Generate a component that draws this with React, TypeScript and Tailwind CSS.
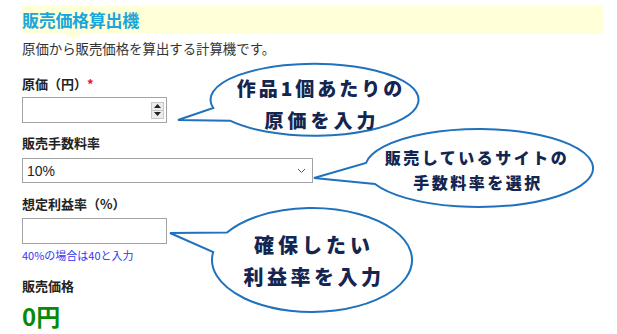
import React from "react";

const jp = "font-['Meiryo','Noto_Sans_CJK_JP',sans-serif]";

function Spinner() {
  return (
    <div className="flex flex-col w-[13px] h-[17px] mr-[2px] border border-[#c8c8c8] bg-[#ececec]">
      <div className="flex-1 flex items-center justify-center border-b border-[#c8c8c8]">
        <svg width="7" height="4" viewBox="0 0 7 4"><path d="M0 4 L3.5 0 L7 4 Z" fill="#222" /></svg>
      </div>
      <div className="flex-1 flex items-center justify-center">
        <svg width="7" height="4" viewBox="0 0 7 4"><path d="M0 0 L3.5 4 L7 0 Z" fill="#222" /></svg>
      </div>
    </div>
  );
}

export default function App() {
  const stroke = "#1f72bb";
  const ink = "#14264f";
  return (
    <div className={`relative w-[617px] h-[334px] bg-white overflow-hidden ${jp}`}>
      <div className="pl-[22px] pr-[14px] pt-[5px] flex flex-col">
        <div className="relative h-[29px] bg-[#ffffd8] flex items-center">
          <span className="text-[17px] font-bold leading-none text-[#1aa6dc] tracking-[-0.3px]">販売価格算出機</span>
          <div className="absolute left-[44px] top-full w-0 h-0 border-l-[7px] border-r-[7px] border-t-[6px] border-l-transparent border-r-transparent border-t-[#ffffd8]" />
        </div>
        <div className="mt-[6px] h-[17px] text-[13.4px] leading-[17px] text-[#333]">原価から販売価格を算出する計算機です。</div>

        <div className="mt-[19px] h-[16px] text-[13px] leading-[16px] font-bold text-[#222]">
          原価（円）<span className="text-[#e8121b]">*</span>
        </div>
        <div className="mt-[5px] w-[145px] h-[26px] border border-[#a3a3a3] bg-white flex items-center justify-end">
          <Spinner />
        </div>

        <div className="mt-[12px] h-[16px] text-[13px] leading-[16px] font-bold text-[#222]">販売手数料率</div>
        <div className="mt-[7px] w-[291px] h-[25px] border border-[#a3a3a3] bg-white flex items-center justify-between pl-[4px] pr-[6px]">
          <span className="text-[14px] leading-none text-[#222] font-['Liberation_Sans',sans-serif]">10%</span>
          <svg width="9" height="6" viewBox="0 0 9 6"><path d="M1 1 L4.5 4.5 L8 1" fill="none" stroke="#555" strokeWidth="1" /></svg>
        </div>

        <div className="mt-[13px] h-[16px] text-[13px] leading-[16px] font-bold text-[#222]">想定利益率（%）</div>
        <div className="mt-[6px] w-[145px] h-[26px] border border-[#a3a3a3] bg-white" />
        <div className="mt-[4px] h-[14px] text-[11px] leading-[14px] text-[#3535f0]">40%の場合は40と入力</div>

        <div className="mt-[16px] h-[16px] text-[13px] leading-[16px] font-bold text-[#222]">販売価格</div>
        <div className="mt-[9px] h-[26px] text-[24px] leading-[26px] font-bold text-[#088a08]">0円</div>
      </div>

      <svg className="absolute left-0 top-0" width="617" height="334" viewBox="0 0 617 334">
        <path d="M 213.3 108 A 104 36 0 1 1 230 120.7 L 178 120 Z" fill="white" stroke={stroke} strokeWidth="2" strokeLinejoin="miter" />
        <path d="M 366 163 A 114 39 0 1 1 375 184 L 314 178 Z" fill="white" stroke={stroke} strokeWidth="2" />
        <path d="M 227 232.6 A 100 52 0 1 1 213.2 252 L 170 233 Z" fill="white" stroke={stroke} strokeWidth="2" />
        <g fill={ink} fontWeight="900" fontFamily="'Noto Sans CJK JP', sans-serif" textAnchor="middle">
          <text x="321" y="96" fontSize="19" letterSpacing="3">作品1個あたりの</text>
          <text x="322" y="128" fontSize="19" letterSpacing="4">原価を入力</text>
          <text x="477" y="164" fontSize="16" letterSpacing="2.5">販売しているサイトの</text>
          <text x="478" y="189" fontSize="16" letterSpacing="2.5">手数料率を選択</text>
          <text x="314" y="253" fontSize="20" letterSpacing="4">確保したい</text>
          <text x="314" y="285" fontSize="20" letterSpacing="3.5">利益率を入力</text>
        </g>
      </svg>
    </div>
  );
}
